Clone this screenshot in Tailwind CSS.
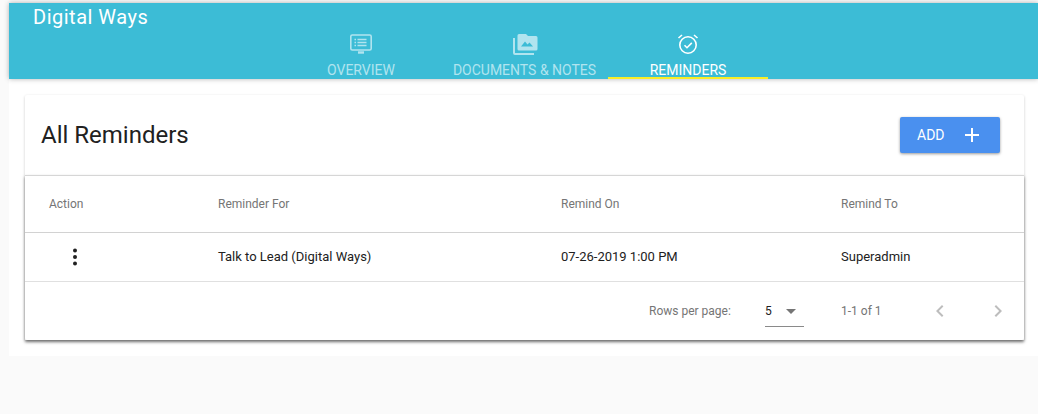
<!DOCTYPE html>
<html lang="en">
<head>
	<meta charset="UTF-8" />
	<title>Reminders</title>
	<script src="https://cdn.jsdelivr.net/npm/@tailwindcss/browser@4"></script>
</head>
<body class="bg-[#fafafa] font-[Roboto,sans-serif] h-[414px] w-[1038px] overflow-hidden">
	<div class="pt-[3px] pl-[9px]">
		<!-- header -->
		<div class="bg-[#3cbcd6] h-[76px] relative shadow-[0_0_5px_rgba(0,0,0,0.3)]">
			<h1 class="absolute left-[24px] top-[2px] text-white text-[20px] leading-[24px] tracking-[0.5px]">Digital Ways</h1>
			<div class="flex justify-center h-full pt-[29px] pl-[2px]">
				<div class="w-[160px] flex flex-col items-center text-[#b1e4ef]">
					<svg class="w-[24px] h-[24px] shrink-0" viewBox="0 0 24 24" fill="none" stroke="currentColor" stroke-width="1.6">
						<rect x="1.8" y="3" width="20.4" height="15" rx="1.5"/>
						<path d="M9 20.5h6" stroke-width="2.4"/>
						<path d="M8.5 7.5h9M8.5 10.5h9M8.5 13.5h9M5.5 7.5h1.5M5.5 10.5h1.5M5.5 13.5h1.5" stroke-width="1.3"/>
					</svg>
					<span class="text-[14px] leading-[16px] mt-[6px]">OVERVIEW</span>
				</div>
				<div class="w-[167px] flex flex-col items-center text-[#b1e4ef]">
					<svg class="w-[26px] h-[24px] shrink-0" viewBox="0 0 26 24" fill="currentColor">
						<path d="M1 6h2v15h19v2H3a2 2 0 0 1-2-2z"/>
						<path d="M7 2h7l2 2h8a1.500 1.500 0 0 1 1.500 1.500V17a1.500 1.500 0 0 1-1.500 1.500H7A1.500 1.500 0 0 1 5.500 17V3.500A1.500 1.500 0 0 1 7 2z"/>
						<path d="M9 14.500l4-5 2.500 3 2-2 3.500 4z" fill="#3cbcd6"/>
					</svg>
					<span class="text-[14px] leading-[16px] mt-[6px] whitespace-nowrap">DOCUMENTS &amp; NOTES</span>
				</div>
				<div class="w-[160px] flex flex-col items-center text-white border-b-2 border-[#f9ee25] h-[47px]">
					<svg class="w-[24px] h-[24px] shrink-0" viewBox="0 0 24 24" fill="none" stroke="currentColor" stroke-width="1.6">
						<circle cx="12" cy="13" r="8.200"/>
						<path d="M8.500 13.200l2.500 2.500 4.800-4.800"/>
						<path d="M2.500 6L6 3M21.500 6L18 3"/>
					</svg>
					<span class="text-[14px] leading-[16px] mt-[6px] shrink-0">REMINDERS</span>
				</div>
			</div>
		</div>
		<!-- content -->
		<div class="bg-white h-[277px] p-[16px] pr-[14px]">
			<div class="bg-white h-[245px] shadow-[0_1px_3px_rgba(0,0,0,0.2)] rounded-[2px]">
				<div class="h-[80px] flex items-center justify-between pl-[16px] pr-[24px]">
					<h2 class="text-[24px] text-[#212121]">All Reminders</h2>
					<button class="w-[100px] h-[36px] bg-[#4a90ef] rounded-[2px] shadow-[0_1px_3px_rgba(0,0,0,0.4)] text-white text-[14px] flex items-center pl-[17px]">
						ADD
						<svg class="w-[24px] h-[24px] ml-[15px]" viewBox="0 0 24 24" fill="white"><path d="M19 13h-6v6h-2v-6H5v-2h6V5h2v6h6v2z"/></svg>
					</button>
				</div>
				<div class="h-[165px] border-t border-[#d6d6d6] shadow-[0_2px_3px_rgba(0,0,0,0.5)]">
					<div class="grid grid-cols-[193px_343px_280px_1fr] h-[57px] items-center border-b border-[#d2d2d2] text-[12px] text-[#757575]">
						<span class="pl-[24px]">Action</span>
						<span>Reminder For</span>
						<span>Remind On</span>
						<span>Remind To</span>
					</div>
					<div class="grid grid-cols-[193px_343px_280px_1fr] h-[49px] items-center border-b border-[#e0e0e0] text-[13px] text-[#212121]">
						<span class="pl-[38px]">
							<svg class="w-[24px] h-[24px]" viewBox="0 0 24 24" fill="#212121"><circle cx="12" cy="5.500" r="2"/><circle cx="12" cy="12" r="2"/><circle cx="12" cy="18.500" r="2"/></svg>
						</span>
						<span>Talk to Lead (Digital Ways)</span>
						<span>07-26-2019 1:00 PM</span>
						<span>Superadmin</span>
					</div>
					<div class="h-[58px] flex items-center text-[12px] text-[#757575] pl-[624px]">
						<span class="w-[116px]">Rows per page:</span>
						<div class="w-[39px] h-[32px] border-b border-[#8a8a8a] flex items-center text-[#212121] relative">
							<span>5</span>
							<svg class="absolute right-[1px] top-[4px] w-[24px] h-[24px]" viewBox="0 0 24 24" fill="#757575"><path d="M7 10l5 5 5-5z"/></svg>
						</div>
						<span class="ml-[37px] w-[87px]">1-1 of 1</span>
						<svg class="w-[24px] h-[24px]" viewBox="0 0 24 24" fill="#bdbdbd"><path d="M15.410 7.410L14 6l-6 6 6 6 1.410-1.410L10.830 12z"/></svg>
						<svg class="ml-[34px] w-[24px] h-[24px]" viewBox="0 0 24 24" fill="#bdbdbd"><path d="M10 6L8.590 7.410 13.170 12l-4.580 4.590L10 18l6-6z"/></svg>
					</div>
				</div>
			</div>
		</div>
	</div>
</body>
</html>
